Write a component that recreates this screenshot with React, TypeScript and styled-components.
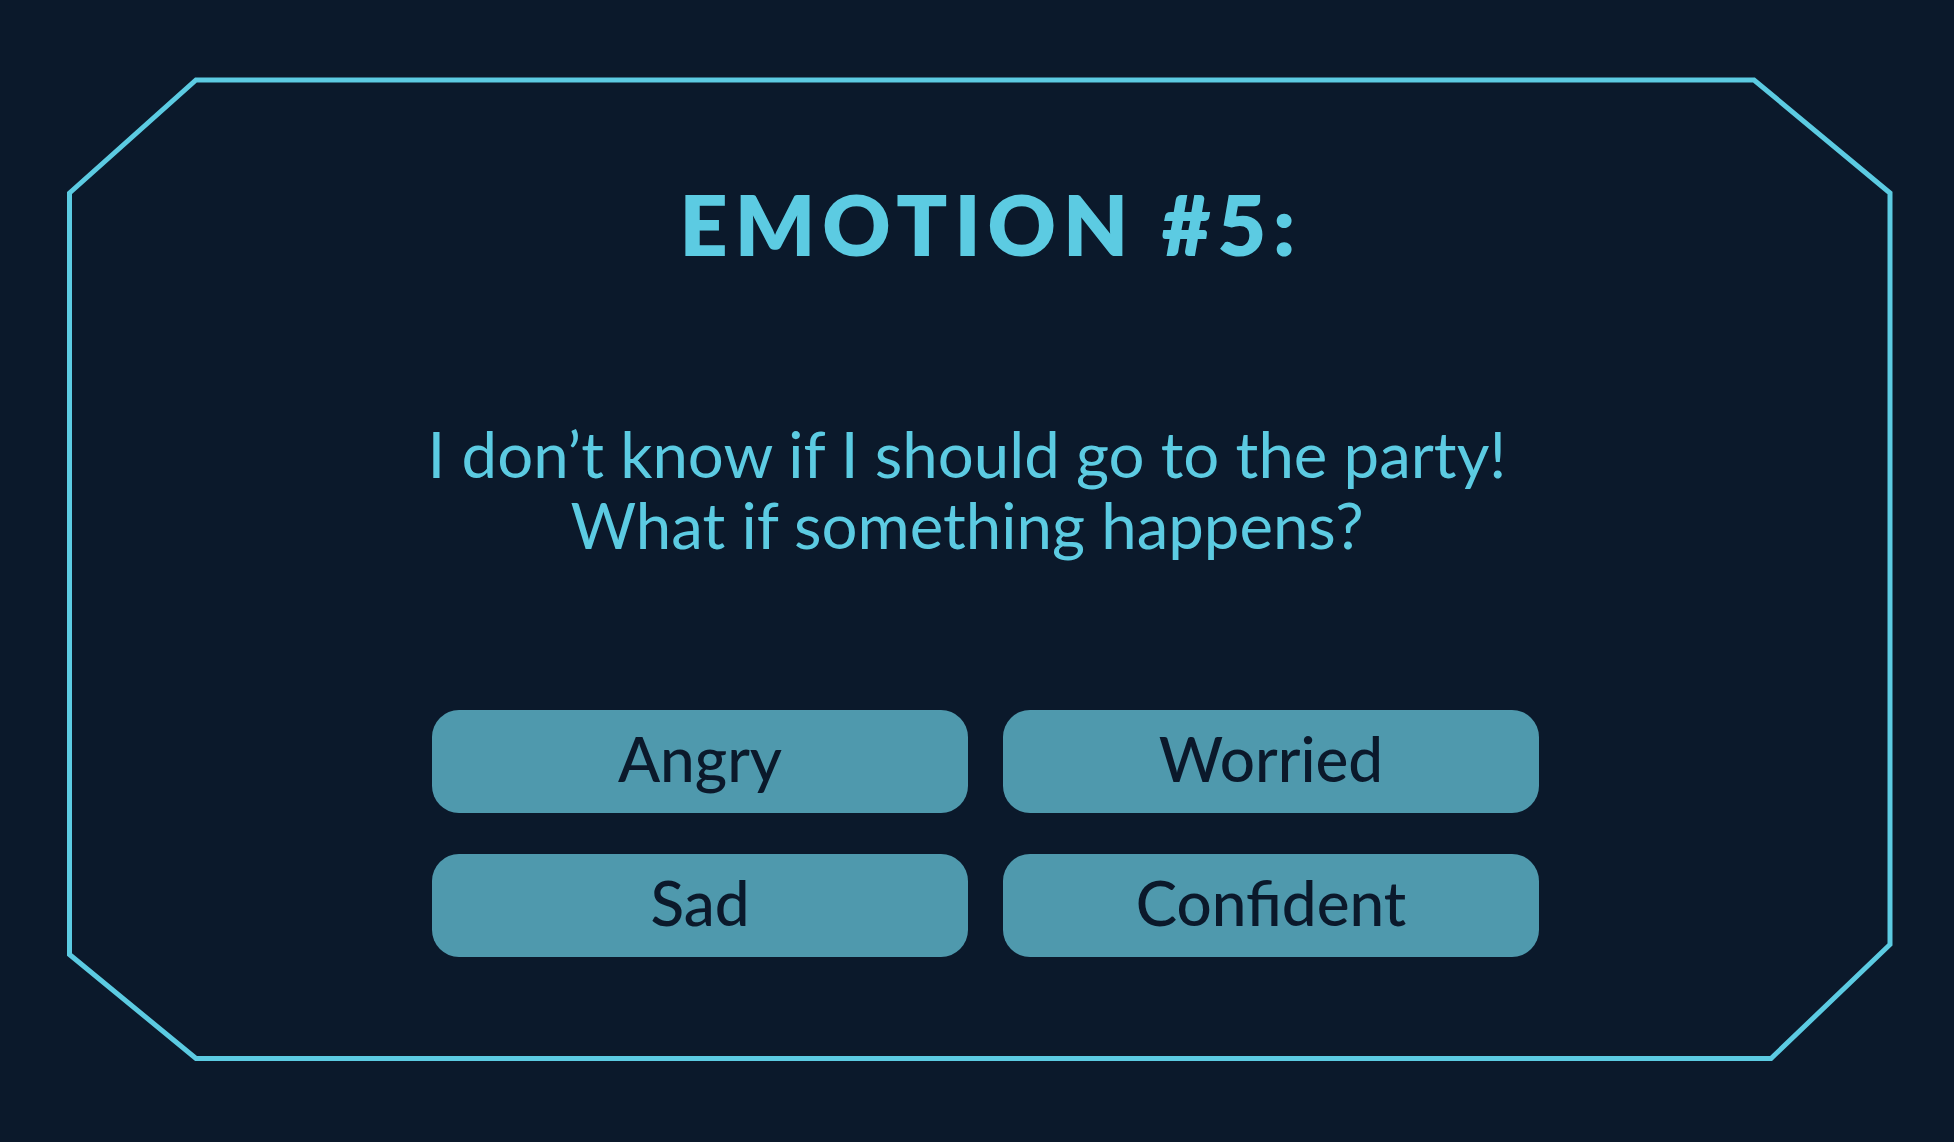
import React from "react";
import styled, { createGlobalStyle } from "styled-components";

const GlobalStyle = createGlobalStyle`
  html, body {
    margin: 0;
    padding: 0;
    background: #0b192b;
  }
  * { box-sizing: border-box; }
`;

const Page = styled.div`
  min-height: 100vh;
  padding: 77px 0 0 67px;
  background: #0b192b;
  font-family: Lato, "Noto Sans", sans-serif;
`;

const Card = styled.section`
  position: relative;
  width: 1826px;
  height: 984px;
  display: flex;
  flex-direction: column;
  align-items: center;
`;

const Frame = styled.svg`
  position: absolute;
  inset: 0;
  width: 100%;
  height: 100%;
  pointer-events: none;
`;

const Title = styled.h1`
  position: relative;
  margin: 105px 0 0;
  padding-left: 22px;
  font-size: 84px;
  line-height: 1;
  font-weight: 800;
  letter-spacing: 7px;
  color: #5ccbe2;
`;

const Question = styled.p`
  position: relative;
  margin: 152px 26px 0 0;
  font-size: 63.5px;
  line-height: 71px;
  font-weight: 400;
  text-align: center;
  color: #5ccbe2;
`;

const Choices = styled.div`
  position: relative;
  align-self: flex-start;
  margin: 150px 0 0 365px;
  display: grid;
  grid-template-columns: 536px 536px;
  column-gap: 35px;
  row-gap: 41px;
`;

const Choice = styled.button`
  height: 103px;
  border: none;
  border-radius: 27px;
  background: #4f99ad;
  color: #0b192b;
  font-family: Lato, "Noto Sans", sans-serif;
  font-size: 62px;
  font-weight: 500;
  line-height: 1;
  padding: 0 0 8px;
  cursor: pointer;
`;

const choices = ["Angry", "Worried", "Sad", "Confident"];

export default function App() {
  return (
    <>
      <GlobalStyle />
      <Page>
        <Card>
          <Frame viewBox="0 0 1826 984" aria-hidden="true">
            <polygon
              points="129,3 1687,3 1823,116 1823,867.5 1704,981.5 129,981.5 2.5,877.5 2.5,116"
              fill="none"
              stroke="#5ccbe2"
              strokeWidth="5"
            />
          </Frame>
          <Title>EMOTION #5:</Title>
          <Question>
            I don’t know if I should go to the party!
            <br />
            What if something happens?
          </Question>
          <Choices>
            {choices.map((c) => (
              <Choice key={c}>{c}</Choice>
            ))}
          </Choices>
        </Card>
      </Page>
    </>
  );
}
